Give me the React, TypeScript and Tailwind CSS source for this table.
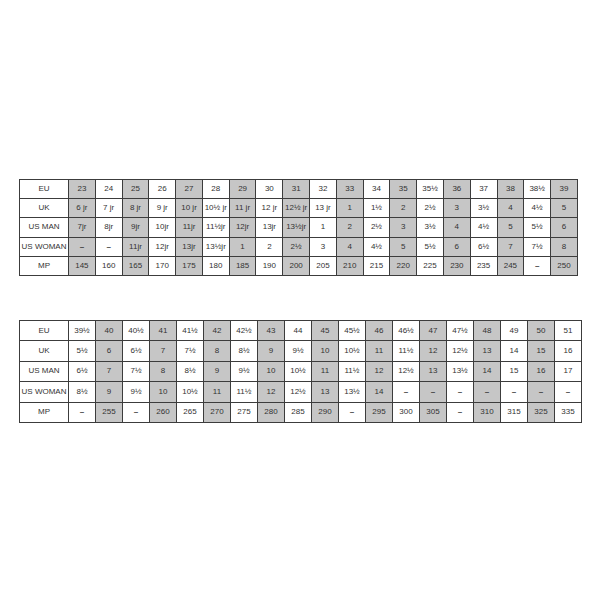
import React from "react";

const t1Cols = ["23","24","25","26","27","28","29","30","31","32","33","34","35","35½","36","37","38","38½","39"];
const t1: [string, string[]][] = [
  ["EU", t1Cols],
  ["UK", ["6 jr","7 jr","8 jr","9 jr","10 jr","10½ jr","11 jr","12 jr","12½ jr","13 jr","1","1½","2","2½","3","3½","4","4½","5"]],
  ["US MAN", ["7jr","8jr","9jr","10jr","11jr","11½jr","12jr","13jr","13½jr","1","2","2½","3","3½","4","4½","5","5½","6"]],
  ["US WOMAN", ["-","-","11jr","12jr","13jr","13½jr","1","2","2½","3","4","4½","5","5½","6","6½","7","7½","8"]],
  ["MP", ["145","160","165","170","175","180","185","190","200","205","210","215","220","225","230","235","245","-","250"]],
];

const t2: [string, string[]][] = [
  ["EU", ["39½","40","40½","41","41½","42","42½","43","44","45","45½","46","46½","47","47½","48","49","50","51"]],
  ["UK", ["5½","6","6½","7","7½","8","8½","9","9½","10","10½","11","11½","12","12½","13","14","15","16"]],
  ["US MAN", ["6½","7","7½","8","8½","9","9½","10","10½","11","11½","12","12½","13","13½","14","15","16","17"]],
  ["US WOMAN", ["8½","9","9½","10","10½","11","11½","12","12½","13","13½","14","-","-","-","-","-","-","-"]],
  ["MP", ["-","255","-","260","265","270","275","280","285","290","-","295","300","305","-","310","315","325","335"]],
];

function SizeTable({ rows, shaded, width, rowH }: { rows: [string, string[]][]; shaded: (i: number) => boolean; width: string; rowH: string }) {
  return (
    <table className={`${width} border-collapse table-fixed text-[8px] text-[#333333]`} style={{ fontFamily: '"Liberation Sans", Arial, sans-serif' }}>
      <colgroup>
        <col className="w-[49px]" />
      </colgroup>
      <tbody>
        {rows.map(([label, vals]) => (
          <tr key={label} className={rowH}>
            <td className="border border-[#3c3c3c] bg-white text-center p-0 whitespace-nowrap">{label}</td>
            {vals.map((v, i) => (
              <td
                key={i}
                className={`border border-[#3c3c3c] text-center p-0 whitespace-nowrap ${shaded(i) ? "bg-[#c6c6c6]" : "bg-white"}`}
              >
                {v === "-" ? <span className="font-bold">–</span> : v}
              </td>
            ))}
          </tr>
        ))}
      </tbody>
    </table>
  );
}

export default function App() {
  return (
    <div className="w-[600px] h-[600px] bg-white pt-[179px] pl-[19px]">
      <SizeTable rows={t1} shaded={(i) => i % 2 === 0} width="w-[559px]" rowH="h-[19.2px]" />
      <div className="h-[44px]" />
      <SizeTable rows={t2} shaded={(i) => i % 2 === 1} width="w-[563px]" rowH="h-[20.4px]" />
    </div>
  );
}
